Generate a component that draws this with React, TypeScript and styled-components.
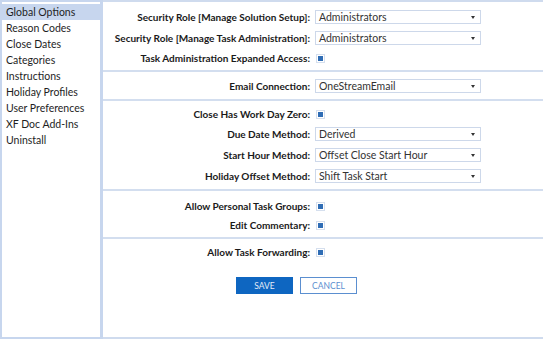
import styled, { createGlobalStyle } from 'styled-components';

const GlobalStyle = createGlobalStyle`
  html, body {
    margin: 0;
    padding: 0;
    background: #ffffff;
  }
  body {
    font-family: Lato, 'Open Sans', sans-serif;
    color: #1e1e1e;
  }
`;

const menuItems = [
  'Global Options',
  'Reason Codes',
  'Close Dates',
  'Categories',
  'Instructions',
  'Holiday Profiles',
  'User Preferences',
  'XF Doc Add-Ins',
  'Uninstall',
];

type Field =
  | { label: string; kind: 'select'; value: string }
  | { label: string; kind: 'check' };

const sections: { top: number; fields: Field[] }[] = [
  {
    top: 8,
    fields: [
      { label: 'Security Role [Manage Solution Setup]:', kind: 'select', value: 'Administrators' },
      { label: 'Security Role [Manage Task Administration]:', kind: 'select', value: 'Administrators' },
      { label: 'Task Administration Expanded Access:', kind: 'check' },
    ],
  },
  {
    top: 7,
    fields: [{ label: 'Email Connection:', kind: 'select', value: 'OneStreamEmail' }],
  },
  {
    top: 7,
    fields: [
      { label: 'Close Has Work Day Zero:', kind: 'check' },
      { label: 'Due Date Method:', kind: 'select', value: 'Derived' },
      { label: 'Start Hour Method:', kind: 'select', value: 'Offset Close Start Hour' },
      { label: 'Holiday Offset Method:', kind: 'select', value: 'Shift Task Start' },
    ],
  },
  {
    top: 9,
    fields: [
      { label: 'Allow Personal Task Groups:', kind: 'check' },
      { label: 'Edit Commentary:', kind: 'check' },
    ],
  },
];

const App = () => {
  return (
    <>
      <GlobalStyle />
      <Frame>
        <Sidebar>
          {menuItems.map((item, idx) => (
            <MenuItem key={item} active={idx === 0}>
              {item}
            </MenuItem>
          ))}
        </Sidebar>
        <Main>
          {sections.map((section, sIdx) => (
            <Section key={sIdx} padTop={section.top}>
              {section.fields.map(field => (
                <Row key={field.label} short={field.kind === 'check'}>
                  <Label>{field.label}</Label>
                  {field.kind === 'select' ? (
                    <Select>
                      <span>{field.value}</span>
                      <Caret />
                    </Select>
                  ) : (
                    <CheckBox>
                      <CheckMark />
                    </CheckBox>
                  )}
                </Row>
              ))}
            </Section>
          ))}
          <LastSection>
            <Row short>
              <Label>Allow Task Forwarding:</Label>
              <CheckBox>
                <CheckMark />
              </CheckBox>
            </Row>
            <ButtonBar>
              <SaveButton>SAVE</SaveButton>
              <CancelButton>CANCEL</CancelButton>
            </ButtonBar>
          </LastSection>
        </Main>
      </Frame>
    </>
  );
};

const Frame = styled.div`
  display: flex;
  width: 543px;
  height: 339px;
`;

const Sidebar = styled.div`
  box-sizing: border-box;
  width: 103px;
  flex: none;
  padding-top: 2px;
  border-top: 2px solid #c7d6ee;
  border-left: 2px solid #c7d6ee;
  border-bottom: 2px solid #c7d6ee;
  border-right: 3px solid #c7d6ee;
  display: flex;
  flex-direction: column;
`;

const MenuItem = styled.div<{ active?: boolean }>`
  height: 16px;
  line-height: 16px;
  padding-left: 4px;
  font-size: 10.5px;
  color: #1e1e1e;
  white-space: nowrap;
  background-color: ${props => (props.active ? '#c7d6ee' : 'transparent')};
`;

const Main = styled.div`
  box-sizing: border-box;
  flex: 1;
  display: flex;
  flex-direction: column;
  border-top: 2px solid #cfdbee;
  border-bottom: 2px solid #cfdbee;
`;

const Section = styled.div<{ padTop: number }>`
  display: flex;
  flex-direction: column;
  gap: 7px;
  padding: ${props => props.padTop}px 0 6px;
  border-bottom: 2px solid #d3deef;
`;

const LastSection = styled.div`
  display: flex;
  flex-direction: column;
  padding-top: 7px;
`;

const Row = styled.div<{ short?: boolean }>`
  display: grid;
  grid-template-columns: 207px 1fr;
  column-gap: 5px;
  align-items: center;
  height: ${props => (props.short ? 12 : 14)}px;
`;

const Label = styled.div`
  text-align: right;
  font-size: 10px;
  font-weight: 700;
  color: #1a1a1a;
  white-space: nowrap;
`;

const Select = styled.div`
  box-sizing: border-box;
  width: 166px;
  height: 14px;
  border: 1px solid #cdd8ea;
  display: flex;
  align-items: center;
  justify-content: space-between;
  padding: 0 5px 0 3px;
  font-size: 10.5px;
  color: #333333;
  white-space: nowrap;
`;

const Caret = styled.span`
  width: 0;
  height: 0;
  border-left: 2.5px solid transparent;
  border-right: 2.5px solid transparent;
  border-top: 3px solid #333333;
`;

const CheckBox = styled.div`
  box-sizing: border-box;
  width: 9px;
  height: 9px;
  margin-left: 1px;
  border: 1px solid #d5dfee;
  display: flex;
  align-items: center;
  justify-content: center;
`;

const CheckMark = styled.div`
  width: 5px;
  height: 5px;
  background-color: #2f6db5;
`;

const ButtonBar = styled.div`
  display: flex;
  gap: 7px;
  padding-left: 133px;
  margin-top: 19px;
`;

const BaseButton = styled.button`
  box-sizing: border-box;
  width: 57px;
  height: 17px;
  padding: 0;
  font-family: Lato, 'Open Sans', sans-serif;
  font-size: 8.5px;
  cursor: pointer;
`;

const SaveButton = styled(BaseButton)`
  background-color: #0e66c1;
  border: 1px solid #0e66c1;
  color: #e4ecf8;
`;

const CancelButton = styled(BaseButton)`
  background-color: #ffffff;
  border: 1px solid #5b8fd0;
  color: #5b8fd0;
`;

export default App;
